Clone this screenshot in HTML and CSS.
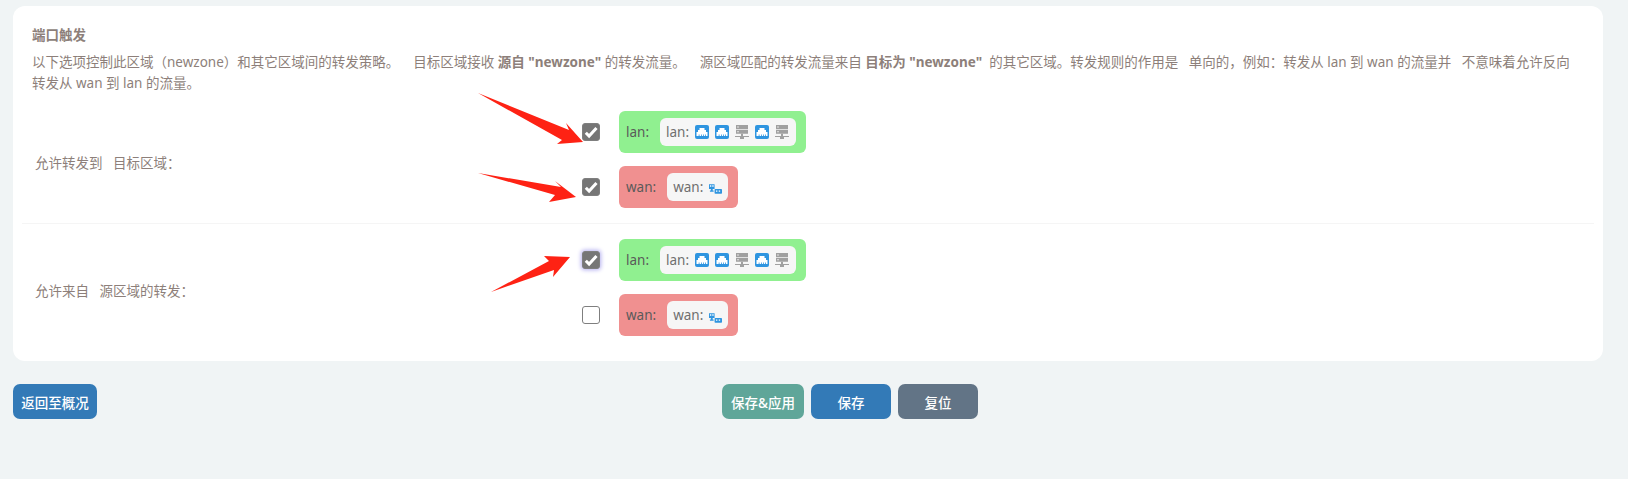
FILE: index.html
```html
<!DOCTYPE html>
<html lang="zh-CN">
<head>
<meta charset="utf-8">
<title>端口触发</title>
<link rel="stylesheet" href="styles.css">
</head>
<body>
<svg class="defs" width="0" height="0" aria-hidden="true">
  <symbol id="port" viewBox="0 0 14 14">
    <rect width="14" height="14" rx="2" fill="#2f95e0"/>
    <path d="M4.500 3h5v2h1.500v2h1.500v4h-1.500V9.500h-.8V11H9V9.500h-.8V11H6.800V9.500H6V11H4.500V9.500h-.8V11H1.500V7H3V5h1.500z" fill="#fff"/>
  </symbol>
  <symbol id="server" viewBox="0 0 14 14">
    <path d="M1 0h12v4H1zM1 4.800h12v4H1z" fill="#a0a0a0"/>
    <path d="M2 1.500h2v1H2zM2 6.300h2v1H2z" fill="#e4e4e4"/>
    <path d="M6 8.800h2V11h6v1H9v2H5v-2H0v-1h6z" fill="#a0a0a0"/>
  </symbol>
  <symbol id="wanicon" viewBox="0 0 14 10">
    <path d="M0 0h6v5H4v1.500h1V8H1V6.500h1V5H0z" fill="#2f95e0"/>
    <rect x="6" y="5" width="8" height="5" rx=".8" fill="#2f95e0"/>
    <path d="M1 1h1.500v1.500H1zM3.500 1H5v1.500H3.500zM7.500 6.500H9V8H7.500zM10.500 6.500H12V8h-1.500z" fill="#fff"/>
  </symbol>
</svg>

<main class="card">
  <h3 class="title">端口触发</h3>
  <p class="desc">以下选项控制此区域（newzone）和其它区域间的转发策略。 &nbsp;&nbsp;&nbsp;目标区域接收 <strong>源自 "newzone"</strong> 的转发流量。 &nbsp;&nbsp;&nbsp;源区域匹配的转发流量来自 <strong>目标为 "newzone"</strong>&nbsp; 的其它区域。转发规则的作用是 &nbsp;&nbsp;单向的，例如：转发从 lan 到 wan 的流量并 &nbsp;&nbsp;不意味着允许反向转发从 wan 到 lan 的流量。</p>

  <section class="row row-first">
    <div class="label">允许转发到 &nbsp;&nbsp;目标区域：</div>
    <div class="options">
      <div class="option">
        <input class="check" type="checkbox" checked aria-label="lan">
        <div class="zone zone-lan">
          <span>lan:</span>
          <span class="devices">lan:
            <svg class="ico"><use href="#port"/></svg>
            <svg class="ico"><use href="#port"/></svg>
            <svg class="ico"><use href="#server"/></svg>
            <svg class="ico"><use href="#port"/></svg>
            <svg class="ico"><use href="#server"/></svg>
          </span>
        </div>
      </div>
      <div class="option">
        <input class="check" type="checkbox" checked aria-label="wan">
        <div class="zone zone-wan">
          <span>wan:</span>
          <span class="devices">wan: <svg class="ico-wan"><use href="#wanicon"/></svg></span>
        </div>
      </div>
    </div>
  </section>

  <section class="row row-second">
    <div class="label">允许来自 &nbsp;&nbsp;源区域的转发：</div>
    <div class="options">
      <div class="option">
        <input class="check check-focus" type="checkbox" checked aria-label="lan">
        <div class="zone zone-lan">
          <span>lan:</span>
          <span class="devices">lan:
            <svg class="ico"><use href="#port"/></svg>
            <svg class="ico"><use href="#port"/></svg>
            <svg class="ico"><use href="#server"/></svg>
            <svg class="ico"><use href="#port"/></svg>
            <svg class="ico"><use href="#server"/></svg>
          </span>
        </div>
      </div>
      <div class="option">
        <input class="check" type="checkbox" aria-label="wan">
        <div class="zone zone-wan">
          <span>wan:</span>
          <span class="devices">wan: <svg class="ico-wan"><use href="#wanicon"/></svg></span>
        </div>
      </div>
    </div>
  </section>
</main>

<footer class="actions">
  <button class="btn btn-back" type="button">返回至概况</button>
  <div class="actions-main">
    <button class="btn btn-apply" type="button">保存&amp;应用</button>
    <button class="btn btn-save" type="button">保存</button>
    <button class="btn btn-reset" type="button">复位</button>
  </div>
</footer>

<svg class="arrows" width="1628" height="479" aria-hidden="true">
  <polygon points="478,93 569,130 566,123 583,142 557,144 562,140" fill="#fe2214"/>
  <polygon points="478,173 561,187 555,181 576,197 549,202 555,195" fill="#fe2214"/>
  <polygon points="491,292 549,261 544,256 570,257 553,277 554,270" fill="#fe2214"/>
</svg>
</body>
</html>
```
FILE: styles.css
```css
* { box-sizing: border-box; }

html, body { margin: 0; height: 479px; overflow: hidden; }

body {
  padding: 6px 25px 0 13px;
  background: #f0f4f5;
  color: #8d7f7a;
  font-family: "Noto Sans", "Noto Sans CJK SC", sans-serif;
  font-size: 13.500px;
}

.defs { position: absolute; }

.card {
  height: 355px;
  padding: 19px 9px 0;
  background: #fff;
  border-radius: 12px;
}

.title {
  margin: 0 10px;
  height: 20px;
  font-size: 13.500px;
  line-height: 20px;
  font-weight: 700;
}

.desc {
  width: 1550px;
  margin: 7px 10px 0;
  line-height: 21px;
}

.desc strong { font-weight: 700; }

.row {
  display: flex;
  align-items: center;
}

.row-first {
  height: 126px;
  margin-top: 4px;
  padding-bottom: 3px;
  border-bottom: 1px solid #f5f5f5;
}

.row-second {
  padding-top: 15px;
  align-items: flex-start;
}

.label {
  width: 560px;
  padding-left: 13px;
  padding-top: 5px;
}

.row-second .label { padding-top: 41px; }

.options {
  display: flex;
  flex-direction: column;
  gap: 13px;
}

.option {
  display: flex;
  align-items: center;
  gap: 19px;
}

.check {
  appearance: none;
  position: relative;
  width: 18px;
  height: 18px;
  margin: 0;
  border: 1px solid #7f7f7f;
  border-radius: 3px;
  background: #fff;
}

.check:checked {
  background: #767676 url("data:image/svg+xml,%3Csvg xmlns='http://www.w3.org/2000/svg' viewBox='0 0 16 16'%3E%3Cpath d='M2.800 8.800l3.300 3.300L13.500 4' fill='none' stroke='%23fff' stroke-width='3'/%3E%3C/svg%3E") center / 16px 16px no-repeat;
}

.check-focus { box-shadow: 0 0 4px 1px #b5b0f0; }

.zone {
  display: flex;
  align-items: center;
  gap: 11px;
  height: 42px;
  padding: 0 10px 0 7px;
  border-radius: 6px;
  color: #5a5a5a;
}

.zone-lan { background: #90f090; }
.zone-wan { background: #f09090; }

.devices {
  display: flex;
  align-items: center;
  gap: 6px;
  height: 28px;
  padding: 0 7px 0 6px;
  background: #f6f6f6;
  border-radius: 6px;
  color: #6f6f6f;
}

.ico { width: 14px; height: 14px; }
.ico-wan { width: 13px; height: 10px; margin: 5px -1.500px 0 0; }

.actions {
  position: relative;
  display: flex;
  justify-content: center;
  margin-top: 23px;
}

.btn-back { position: absolute; left: 0; top: 0; }

.actions-main {
  display: flex;
  gap: 7px;
  margin-left: 84px;
}

.btn {
  height: 35px;
  padding: 0 7px;
  border: 0;
  border-radius: 7px;
  color: #fff;
  font: inherit;
  font-weight: 500;
}

.btn-back { width: 84px; background: #337ab7; padding: 0; }
.btn-apply { width: 82px; background: #5fa699; padding: 0; }
.btn-save { width: 80px; background: #337ab7; }
.btn-reset { width: 80px; background: #627486; }

.arrows { position: absolute; left: 0; top: 0; pointer-events: none; }
```
